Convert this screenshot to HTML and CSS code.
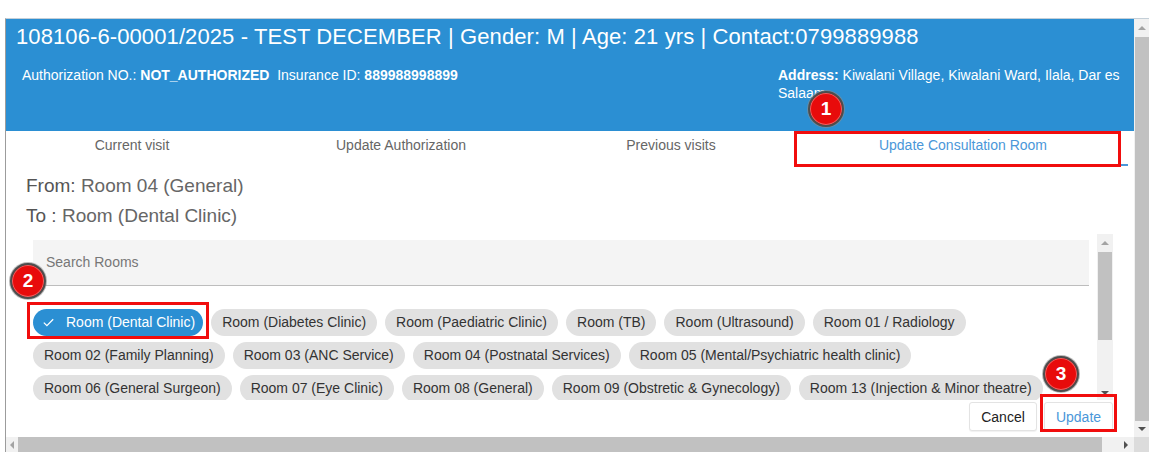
FILE: index.html
```html
<!DOCTYPE html>
<html lang="en">
<head>
<meta charset="utf-8">
<title>Update Consultation Room</title>
<link rel="stylesheet" href="styles.css">
</head>
<body>
<div class="window">
  <div class="viewport">
    <header class="hdr">
      <h1 class="title">108106-6-00001/2025 - TEST DECEMBER | Gender: M | Age: 21 yrs | Contact:0799889988</h1>
      <div class="hdr-row">
        <div class="auth">Authorization NO.: <b>NOT_AUTHORIZED</b>&nbsp;&nbsp;Insurance ID: <b>889988998899</b></div>
        <div class="addr"><b>Address:</b> Kiwalani Village, Kiwalani Ward, Ilala, Dar es Salaam</div>
      </div>
    </header>
    <nav class="tabs">
      <div class="tab">Current visit</div>
      <div class="tab">Update Authorization</div>
      <div class="tab">Previous visits</div>
      <div class="tab active">Update Consultation Room</div>
    </nav>
    <section class="content">
      <p class="line">From: <span class="val">Room 04 (General)</span></p>
      <p class="line line-to">To : <span class="val">Room (Dental Clinic)</span></p>
      <div class="panel">
        <div class="picker">
          <div class="picker-scroll">
            <div class="search">Search Rooms</div>
            <div class="chips">
              <span class="chip sel"><svg class="check" width="11" height="9" viewBox="0 0 11 9"><polyline points="0.8,4.6 3.9,7.6 10.2,1.2" fill="none" stroke="#fff" stroke-width="1.3"/></svg>Room (Dental Clinic)</span>
              <span class="chip">Room (Diabetes Clinic)</span>
              <span class="chip">Room (Paediatric Clinic)</span>
              <span class="chip">Room (TB)</span>
              <span class="chip">Room (Ultrasound)</span>
              <span class="chip">Room 01 / Radiology</span>
              <span class="chip">Room 02 (Family Planning)</span>
              <span class="chip">Room 03 (ANC Service)</span>
              <span class="chip">Room 04 (Postnatal Services)</span>
              <span class="chip">Room 05 (Mental/Psychiatric health clinic)</span>
              <span class="chip">Room 06 (General Surgeon)</span>
              <span class="chip">Room 07 (Eye Clinic)</span>
              <span class="chip">Room 08 (General)</span>
              <span class="chip">Room 09 (Obstretic &amp; Gynecology)</span>
              <span class="chip">Room 13 (Injection &amp; Minor theatre)</span>
            </div>
          </div>
          <div class="sbar sbar-inner">
            <span class="arr up light"></span>
            <span class="thumb"></span>
            <span class="track"></span>
            <span class="arr down dark"></span>
          </div>
        </div>
        <div class="actions">
          <button class="btn">Cancel</button>
          <button class="btn btn-primary">Update</button>
        </div>
      </div>
    </section>
  </div>
  <div class="sbar sbar-outer">
    <span class="arr up light"></span>
    <span class="thumb"></span>
    <span class="arr down dark"></span>
  </div>
  <div class="hbar">
    <span class="harr left light"></span>
    <span class="hthumb"></span>
    <span class="htrack"></span>
    <span class="harr right dark"></span>
  </div>
  <div class="corner"></div>
</div>

<div class="mark mark-tab"></div>
<div class="mark mark-chip"></div>
<div class="mark mark-btn"></div>
<div class="badge badge-1">1</div>
<div class="badge badge-2">2</div>
<div class="badge badge-3">3</div>
</body>
</html>
```
FILE: styles.css
```css
* { box-sizing: border-box; }

body {
  margin: 0;
  background: #fff;
  font-family: "Liberation Sans", Arial, sans-serif;
}

.window {
  position: relative;
  margin: 18px 0 0 5px;
  width: 1144px;
  height: 434px;
  display: grid;
  grid-template-columns: 1fr 15px;
  grid-template-rows: 1fr 15px;
  border-top: 1px solid #c4cfd8;
  border-left: 1px solid #9c9c9c;
}

.viewport {
  overflow: hidden;
  min-height: 0;
  display: flex;
  flex-direction: column;
}

/* header */
.hdr {
  flex: none;
  height: 112px;
  background: #2b8fd3;
  color: #fff;
  padding: 4px 0 0 10px;
}
.title {
  margin: 0;
  font-size: 22px;
  font-weight: normal;
  line-height: 28px;
  letter-spacing: 0.1px;
  white-space: nowrap;
}
.hdr-row {
  display: flex;
  margin-top: 15px;
  padding-left: 6px;
  font-size: 14px;
  line-height: 18px;
}
.auth { flex: 1; white-space: nowrap; }
.addr { width: 356px; padding-right: 4px; }

/* tabs */
.tabs {
  flex: none;
  display: grid;
  grid-template-columns: 252px 286px 254px 330px;
  height: 35px;
}
.tab {
  text-align: center;
  font-size: 14px;
  line-height: 16px;
  padding-top: 6px;
  color: #666;
}
.tab.active {
  color: #4a97d9;
  border-bottom: 2px solid #4a97d9;
}

/* content */
.content {
  padding: 10px 0 0 20px;
}
.line {
  margin: 0;
  font-size: 19px;
  line-height: 20px;
  color: #555;
}
.line .val { color: #666; }
.line-to { margin-top: 10px; }

.panel {
  margin: 8px 0 0 7px;
  width: 1080px;
}
.picker {
  display: grid;
  grid-template-columns: 1fr 16px;
  column-gap: 8px;
  height: 166px;
}
.picker-scroll {
  overflow: hidden;
  padding-top: 6px;
}
.search {
  height: 46px;
  line-height: 45px;
  background: #f4f4f4;
  border-bottom: 1px solid #bdbdbd;
  padding-left: 13px;
  font-size: 14px;
  color: #777;
}
.chips {
  display: flex;
  flex-wrap: wrap;
  gap: 6px 8px;
  margin-top: 23px;
}
.chip {
  height: 27px;
  line-height: 27px;
  padding: 0 11px;
  border-radius: 14px;
  background: #e1e1e1;
  color: #333;
  font-size: 14px;
  white-space: nowrap;
}
.chip.sel {
  display: flex;
  align-items: center;
  gap: 12px;
  padding: 0 8px 0 10px;
  background: #2b8fd3;
  color: #fff;
}
.check { display: block; }

.actions {
  display: flex;
  justify-content: flex-end;
  gap: 7px;
  margin-top: 2px;
}
.btn {
  height: 29px;
  padding: 0;
  width: 68px;
  border: 1px solid #e3e3e3;
  border-radius: 3px;
  background: #fff;
  font-family: inherit;
  font-size: 14px;
  color: #222;
  box-shadow: 0 1px 1px rgba(0,0,0,0.06);
}
.btn-primary { width: 69px; color: #4a97d9; }

/* fake scrollbars */
.sbar {
  display: flex;
  flex-direction: column;
  align-items: center;
  background: #f1f1f1;
}
.sbar .thumb {
  background: #c1c1c1;
  width: 14px;
}
.sbar-outer .thumb { flex: 1; }
.sbar-inner .thumb { height: 88px; }
.sbar-inner .track { flex: 1; }
.arr {
  flex: none;
  height: 18px;
  width: 100%;
  position: relative;
}
.arr::after {
  content: "";
  position: absolute;
  left: 50%;
  top: 50%;
  transform: translate(-50%, -50%);
  border-left: 4px solid transparent;
  border-right: 4px solid transparent;
}
.arr.up::after { border-bottom: 4px solid #a3a3a3; }
.arr.down::after { border-top: 4px solid #505050; }
.sbar-outer .arr.down { height: 16px; }
.sbar-inner .arr.down { height: 14px; }

.hbar {
  display: grid;
  grid-template-columns: 12px 1084px 1fr 17px;
  background: #f1f1f1;
}
.hthumb { background: #c1c1c1; }
.harr { position: relative; }
.harr::after {
  content: "";
  position: absolute;
  left: 50%;
  top: 50%;
  transform: translate(-50%, -50%);
  border-top: 4px solid transparent;
  border-bottom: 4px solid transparent;
}
.harr.left::after { border-right: 4px solid #a3a3a3; }
.harr.right::after { border-left: 4px solid #505050; }
.corner { background: #dcdcdc; }

/* annotation overlays */
.mark {
  position: absolute;
  border: 3px solid #f10d0d;
}
.mark-tab { left: 794px; top: 131px; width: 327px; height: 36px; }
.mark-chip { left: 27px; top: 302px; width: 182px; height: 37px; }
.mark-btn { left: 1040px; top: 394px; width: 77px; height: 38px; }

.badge {
  position: absolute;
  width: 36px;
  height: 36px;
  border-radius: 50%;
  background: #e80b0b;
  border: 2px solid #4d4d4d;
  box-shadow: 0 0 0 1px rgba(140,140,140,0.6), inset 0 0 0 1px rgba(255,255,255,0.35);
  color: #fff;
  font-weight: bold;
  font-size: 19px;
  line-height: 32px;
  text-align: center;
}
.badge-1 { left: 808px; top: 91px; }
.badge-2 { left: 10px; top: 263px; }
.badge-3 { left: 1043px; top: 356px; }
```
